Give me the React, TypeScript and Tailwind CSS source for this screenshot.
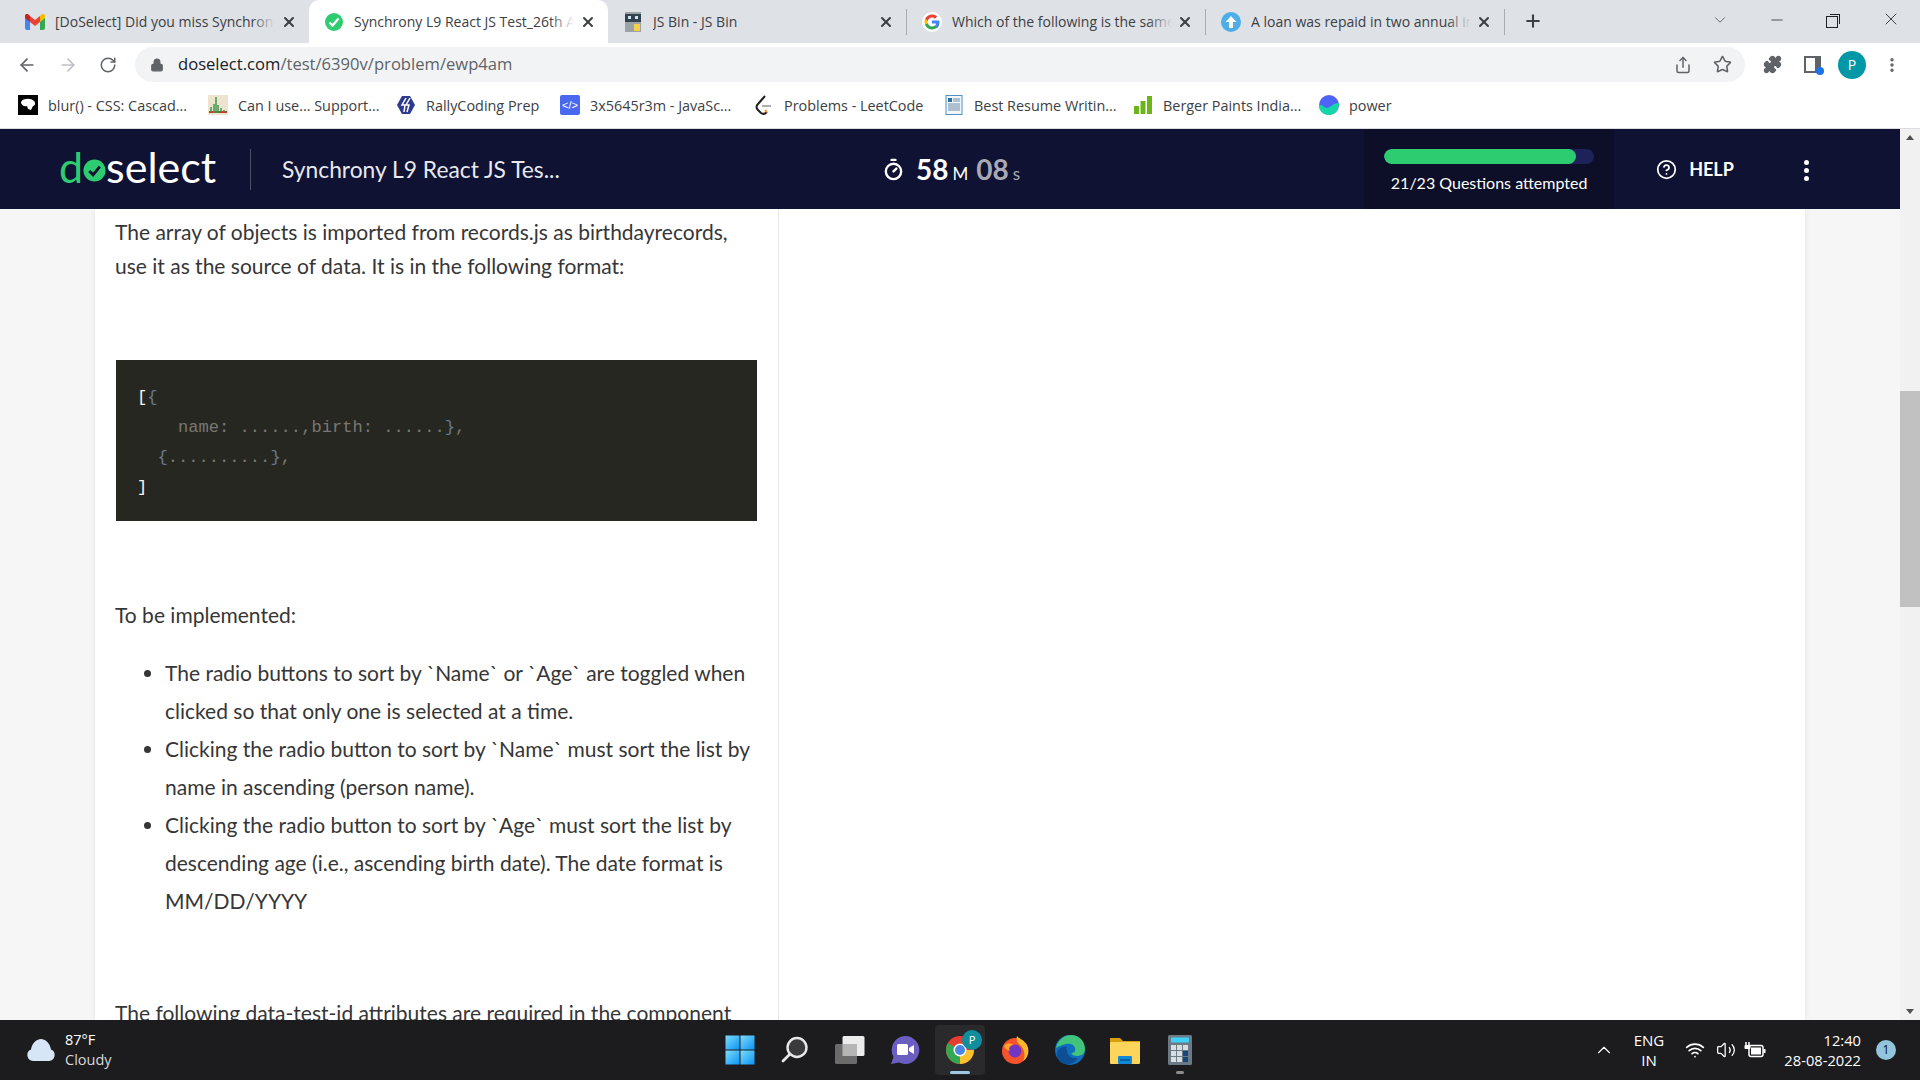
import { ArrowLeft, ArrowRight, ChevronDown, ChevronUp, CircleHelp, Lock, Minus, MoreVertical, Plus, Puzzle, RotateCw, Share, Star, Timer, Volume2, Wifi, X } from "lucide-react";
import type { ReactNode } from "react";

const Gmail = () => (
  <svg viewBox="0 0 20 16" className="w-[20px] h-[16px]">
    <path d="M0 3v11a2 2 0 0 0 2 2h3V7z" fill="#4285f4" />
    <path d="M20 3v11a2 2 0 0 1-2 2h-3V7z" fill="#34a853" />
    <path d="M15 2v6l5-4V2c0-2-2-2.500-3.500-1.500z" fill="#fbbc04" />
    <path d="M5 8V2l5 4 5-4v6l-5 4z" fill="#ea4335" />
    <path d="M0 4V2C0 0 2-.5 3.500.5L5 2v6z" fill="#c5221f" />
  </svg>
);

const CheckBadge = () => (
  <svg viewBox="0 0 20 20" className="w-[20px] h-[20px]">
    <circle cx="10" cy="10" r="9" fill="#2ecc71" />
    <path d="M5.500 10.500l3 3 6-7" fill="none" stroke="#fff" strokeWidth="2.400" />
  </svg>
);

const JsBin = () => (
  <svg viewBox="0 0 16 20" className="w-[16px] h-[20px]">
    <rect width="16" height="20" fill="#9ba3a9" />
    <rect y="2" width="16" height="8" fill="#33424f" />
    <rect x="3" y="4" width="3" height="3" fill="#cfe4f2" />
    <rect x="10" y="4" width="3" height="3" fill="#cfe4f2" />
    <rect x="9" y="12" width="6" height="7" fill="#f5d04c" />
  </svg>
);

const GoogleG = () => (
  <svg viewBox="0 0 24 24" className="w-[20px] h-[20px]">
    <circle cx="12" cy="12" r="12" fill="#fff" />
    <path d="M21 12.200c0-.7-.1-1.300-.2-1.900H12v3.600h5.100c-.2 1.200-.9 2.200-1.900 2.800v2.400h3c1.800-1.600 2.800-4 2.800-6.900z" fill="#4285f4" />
    <path d="M12 21c2.500 0 4.500-.8 6.100-2.300l-3-2.300c-.8.600-1.900.9-3.100.9-2.400 0-4.400-1.600-5.100-3.800H3.800v2.400C5.300 18.900 8.400 21 12 21z" fill="#34a853" />
    <path d="M6.900 13.500c-.4-1-.4-2.100 0-3.100V8H3.800c-1 2-1 4.900 0 6.900z" fill="#fbbc04" />
    <path d="M12 6.600c1.300 0 2.500.5 3.500 1.400L18.200 5.300C16.500 3.800 14.400 3 12 3 8.400 3 5.300 5.100 3.800 8l3.100 2.400C7.600 8.200 9.600 6.600 12 6.600z" fill="#ea4335" />
  </svg>
);

const UploadBadge = () => (
  <svg viewBox="0 0 20 20" className="w-[20px] h-[20px]">
    <circle cx="10" cy="10" r="10" fill="#4eaee8" />
    <path d="M10 4l5.500 6H12v6H8v-6H4.500z" fill="#fff" />
  </svg>
);

const tabs: { title: string; icon: ReactNode; active?: boolean; sep?: boolean }[] = [
  { title: "[DoSelect] Did you miss Synchrony L9 React", icon: <Gmail /> },
  { title: "Synchrony L9 React JS Test_26th August", icon: <CheckBadge />, active: true },
  { title: "JS Bin - JS Bin", icon: <JsBin />, sep: true },
  { title: "Which of the following is the same as", icon: <GoogleG />, sep: true },
  { title: "A loan was repaid in two annual instalments", icon: <UploadBadge />, sep: true },
];

function Tab({ title, icon, active, sep }: { title: string; icon: ReactNode; active?: boolean; sep?: boolean }) {
  return (
    <div className={`w-[299px] shrink-0 flex items-center pl-[15px] pr-[12px] ${active ? "bg-white rounded-t-[10px]" : ""} ${sep ? "h-[26px] border-r border-[#9aa0a6]/80" : "h-[43px]"}`}>
      <div className="w-[20px] shrink-0 flex justify-center">{icon}</div>
      <div className="relative ml-[10px] w-[220px] overflow-hidden whitespace-nowrap text-[14px] text-[#3c4043]">
        {title}
        <div className={`absolute inset-y-0 right-0 w-[24px] bg-gradient-to-r from-transparent ${active ? "to-white" : "to-[#dee1e6]"}`} />
      </div>
      <X size={16} strokeWidth={3} className="ml-auto text-[#3c4043]" />
    </div>
  );
}

const Rally = () => (
  <svg viewBox="0 0 20 20" className="w-[20px] h-[20px]">
    <path d="M6 1h8l5 9-5 9H6l-5-9z" fill="#2e3a8c" />
    <path d="M10 3L6 10h3l-1 7M14 3l-4 7h3l-2 7" fill="none" stroke="#fff" strokeWidth="1.500" />
  </svg>
);

const bookmarks: { title: string; cls: string; icon: ReactNode }[] = [
  {
    title: "blur() - CSS: Cascad...",
    cls: "w-[190px]",
    icon: (
      <svg viewBox="0 0 20 20" className="w-[20px] h-[20px]">
        <rect width="20" height="20" fill="#000" />
        <path d="M3 7c2-4 10-4 13-1 2 2 1 5-1 5l-2 4-3-1-1-3c-3 1-6-1-6-4z" fill="#fff" />
      </svg>
    ),
  },
  {
    title: "Can I use... Support...",
    cls: "w-[188px]",
    icon: (
      <svg viewBox="0 0 20 20" className="w-[20px] h-[20px]">
        <rect width="20" height="20" fill="#eee3cf" />
        <path d="M1 17h18" stroke="#c0392b" strokeWidth="2" />
        <path d="M3 17v-5M6 18V9M8 18V2M10 18v-8M13 17v-4M16 17v-2" stroke="#3e9b4f" strokeWidth="1.500" />
      </svg>
    ),
  },
  { title: "RallyCoding Prep", cls: "w-[164px]", icon: <Rally /> },
  {
    title: "3x5645r3m - JavaSc...",
    cls: "w-[194px]",
    icon: (
      <div className="w-[20px] h-[20px] bg-[#4a67f0] rounded-[2px] flex items-center justify-center text-white text-[11px] font-['Liberation_Sans']">&lt;/&gt;</div>
    ),
  },
  {
    title: "Problems - LeetCode",
    cls: "w-[190px]",
    icon: (
      <svg viewBox="0 0 20 20" className="w-[20px] h-[20px]">
        <path d="M11 1L4 9c-2 2-2 4 0 6l3 3c2 1.500 4 1 6-1" fill="none" stroke="#1f1f1f" strokeWidth="2" />
        <path d="M13 17l-2-2" stroke="#f0a020" strokeWidth="2" />
        <path d="M8 11h9" stroke="#b0b0b0" strokeWidth="2" />
      </svg>
    ),
  },
  {
    title: "Best Resume Writin...",
    cls: "w-[189px]",
    icon: (
      <svg viewBox="0 0 20 20" className="w-[20px] h-[20px]">
        <rect x="2" y="0.500" width="16" height="19" fill="#f2f7fb" stroke="#4f8fc4" />
        <rect x="4" y="3" width="4" height="4" fill="#2f6fa8" />
        <path d="M9 4h7M9 6h7M4 9h12M4 11h12M4 13h12M4 15h12" stroke="#6b8aa5" />
      </svg>
    ),
  },
  {
    title: "Berger Paints India...",
    cls: "w-[186px]",
    icon: (
      <svg viewBox="0 0 20 20" className="w-[20px] h-[20px]">
        <rect x="1" y="11" width="5" height="8" fill="#6cb31c" />
        <rect x="7.500" y="6" width="5" height="13" fill="#6cb31c" />
        <rect x="14" y="1" width="5" height="18" fill="#6cb31c" />
      </svg>
    ),
  },
  {
    title: "power",
    cls: "w-[100px]",
    icon: (
      <svg viewBox="0 0 20 20" className="w-[20px] h-[20px]">
        <circle cx="10" cy="10" r="10" fill="#4f63f5" />
        <path d="M0 10c3-1 5 3 8 3s6-5 12-5c0 7-4 12-10 12S0 16 0 10z" fill="#14d6a6" />
      </svg>
    ),
  },
];

const WinLogo = () => (
  <svg viewBox="0 0 30 30" className="w-[30px] h-[30px]">
    <defs>
      <linearGradient id="win" x1="0" y1="0" x2="1" y2="1">
        <stop offset="0" stopColor="#7ddcfb" />
        <stop offset="1" stopColor="#0a94f5" />
      </linearGradient>
    </defs>
    <rect x="0.500" y="0.500" width="14" height="14" fill="url(#win)" />
    <rect x="15.500" y="0.500" width="14" height="14" fill="url(#win)" />
    <rect x="0.500" y="15.500" width="14" height="14" fill="url(#win)" />
    <rect x="15.500" y="15.500" width="14" height="14" fill="url(#win)" />
  </svg>
);

const SearchIcon = () => (
  <svg viewBox="0 0 28 28" className="w-[28px] h-[28px]">
    <circle cx="16" cy="11.500" r="9.500" fill="#3a3a3c" stroke="#e8e8e8" strokeWidth="2.400" />
    <path d="M9 18l-7 7" stroke="#e8e8e8" strokeWidth="2.800" strokeLinecap="round" />
  </svg>
);

const TaskView = () => (
  <svg viewBox="0 0 30 28" className="w-[30px] h-[28px]">
    <rect x="7.500" y="0" width="22" height="20" rx="1.500" fill="#ececec" />
    <rect x="0" y="8" width="22" height="20" rx="1.500" fill="#6b6b6b" />
    <rect x="7.500" y="8" width="14.500" height="12" fill="#b5b5b5" />
  </svg>
);

const ChatIcon = () => (
  <svg viewBox="0 0 30 30" className="w-[30px] h-[30px]">
    <path d="M15 1a14 14 0 1 1-6 26.500L1 29l2.500-7A14 14 0 0 1 15 1z" fill="#6a5fc1" />
    <rect x="7" y="9" width="11" height="11" rx="1.500" fill="#fff" />
    <path d="M19 13l5-3v9l-5-3z" fill="#fff" />
  </svg>
);

const ChromeIcon = () => (
  <div className="relative w-[28px] h-[28px]">
    <svg viewBox="0 0 28 28" className="w-[28px] h-[28px]">
      <circle cx="14" cy="14" r="14" fill="#e53e30" />
      <path d="M14 14L1.900 7A14 14 0 0 0 14 28l7-14z" fill="#33a852" />
      <path d="M14 14h14a14 14 0 0 1-14 14z" fill="#fbc02d" />
      <circle cx="14" cy="14" r="6.500" fill="#fff" />
      <circle cx="14" cy="14" r="5" fill="#4a86e8" />
    </svg>
    <div className="absolute -top-[6px] -right-[8px] w-[20px] h-[20px] rounded-full bg-[#0f8f9e] text-white text-[11px] flex items-center justify-center">P</div>
  </div>
);

const FirefoxIcon = () => (
  <svg viewBox="0 0 28 28" className="w-[28px] h-[28px]">
    <circle cx="14" cy="15" r="13" fill="#f6532d" />
    <path d="M16 0c2 3 6 3 10 9 3 6 1 13-4 16 3-6 1-13-3-16-3-2-4-5-3-9z" fill="#ffb62b" />
    <circle cx="14" cy="15" r="6.500" fill="#7136c4" />
    <path d="M3 10c3-4 7-3 9-1-3 0-5 3-3 6-3-1-5-2-6-5z" fill="#ffa32a" />
  </svg>
);

const EdgeIcon = () => (
  <svg viewBox="0 0 30 30" className="w-[30px] h-[30px]">
    <circle cx="15" cy="15" r="15" fill="#0f6fbe" />
    <path d="M1 13C3 4 10 0 16 0c8 0 14 6 14 14 0 5-4 7-8 7-3 0-5-1-6-3 3 0 5-2 4-5-1-4-5-5-9-4S3 11 1 13z" fill="#41c37b" />
    <path d="M12 15c0 6 5 9 11 8-3 5-9 7-13 6-5-1-9-6-8-11 1-4 5-7 10-6-1 1-1 2 0 3z" fill="#0d4e94" />
  </svg>
);

const FolderIcon = () => (
  <svg viewBox="0 0 30 28" className="w-[30px] h-[28px]">
    <path d="M0 2h10l3 3h17v4H0z" fill="#d99f0c" />
    <rect y="6" width="30" height="22" rx="1" fill="#fcd55a" />
    <rect x="8" y="20" width="14" height="8" rx="1" fill="#1288d8" />
    <rect x="10" y="23" width="10" height="2" fill="#0b5fa5" />
  </svg>
);

const CalcIcon = () => (
  <svg viewBox="0 0 24 30" className="w-[24px] h-[30px]">
    <rect width="24" height="30" rx="1.500" fill="#6c7a86" />
    <rect x="3" y="2.500" width="18" height="5" fill="#3fd0f5" />
    {[0, 1, 2].flatMap((r) =>
      [0, 1, 2].map((c) => <rect key={`${r}${c}`} x={3 + c * 6} y={10 + r * 6} width="5" height="5" fill={c === 2 && r > 0 ? "#15467e" : "#d8dde0"} />)
    )}
  </svg>
);

const Battery = () => (
  <svg viewBox="0 0 22 18" className="w-[22px] h-[18px]">
    <path d="M2 1v3M5 1v3" stroke="#fff" strokeWidth="1.500" />
    <rect x="0.500" y="4" width="6" height="4" rx="1" fill="#fff" />
    <rect x="5" y="4.500" width="14" height="11" rx="2" fill="none" stroke="#fff" strokeWidth="1.500" />
    <rect x="7" y="6.500" width="10" height="7" fill="#fff" />
    <rect x="19.500" y="8" width="2" height="4" fill="#fff" />
  </svg>
);

function TaskItem({ children, dot }: { children: ReactNode; dot?: string }) {
  return (
    <div className={`relative w-[50px] h-[50px] rounded-[4px] flex items-center justify-center ${dot === "active" ? "bg-[#2a2a2d]" : ""}`}>
      {children}
      {dot === "active" && <div className="absolute bottom-[1px] w-[20px] h-[3px] rounded-full bg-[#9ecae1]" />}
      {dot === "open" && <div className="absolute bottom-[1px] w-[8px] h-[3px] rounded-full bg-[#8c8c8c]" />}
    </div>
  );
}

const listItems = [
  "The radio buttons to sort by `Name` or `Age` are toggled when clicked so that only one is selected at a time.",
  "Clicking the radio button to sort by `Name` must sort the list by name in ascending (person name).",
  "Clicking the radio button to sort by `Age` must sort the list by descending age (i.e., ascending birth date). The date format is MM/DD/YYYY",
];

export default function App() {
  return (
    <div className="w-[1920px] h-[1080px] overflow-hidden flex flex-col bg-white font-['Open_Sans',sans-serif]">
      {/* Tab strip */}
      <div className="h-[43px] shrink-0 bg-[#dee1e6] flex items-end pl-[10px]">
        <div className="flex items-center h-[43px]">
          {tabs.map((t) => (
            <Tab key={t.title} {...t} />
          ))}
        </div>
        <Plus size={20} strokeWidth={2.500} className="ml-[18px] mb-[12px] text-[#3c4043]" />
        <ChevronDown size={18} strokeWidth={1} className="ml-[168px] mb-[14px] text-[#3c4043]" />
        <Minus size={18} strokeWidth={1} className="ml-[39px] mb-[14px] text-[#202124]" />
        <div className="ml-[40px] mb-[15px] relative w-[12px] h-[12px] border border-[#202124]">
          <div className="absolute -top-[3px] -right-[3px] w-[10px] h-[10px] border-t border-r border-[#202124]" />
        </div>
        <X size={20} strokeWidth={1} className="ml-[43px] mb-[14px] text-[#202124]" />
      </div>

      {/* Toolbar */}
      <div className="h-[43px] shrink-0 bg-white flex items-center pl-[17px]">
        <ArrowLeft size={20} className="text-[#5f6368]" />
        <ArrowRight size={20} className="ml-[21px] text-[#bdc1c6]" />
        <RotateCw size={18} className="ml-[21px] text-[#5f6368]" />
        <div className="ml-[18px] w-[1610px] h-[35px] rounded-full bg-[#f1f3f4] flex items-center pl-[15px] pr-[13px]">
          <Lock size={14} fill="#5f6368" className="text-[#5f6368]" />
          <div className="ml-[14px] text-[16.6px] text-[#5f6368] whitespace-nowrap">
            <span className="text-[#202124]">doselect.com</span>/test/6390v/problem/ewp4am
          </div>
          <Share size={18} className="ml-auto text-[#5f6368]" />
          <Star size={19} className="ml-[21px] text-[#5f6368]" />
        </div>
        <Puzzle size={19} fill="#5f6368" className="ml-[18px] text-[#5f6368]" />
        <div className="ml-[22px] relative w-[17px] h-[17px] border-2 border-[#5f6368] border-r-[6px]">
          <div className="absolute -bottom-[4px] -right-[9px] w-[8px] h-[8px] rounded-full bg-[#1a73e8]" />
        </div>
        <div className="ml-[17px] w-[28px] h-[28px] rounded-full bg-[#0097a7] text-white text-[14px] flex items-center justify-center">P</div>
        <MoreVertical size={18} strokeWidth={2.500} className="ml-[17px] text-[#5f6368]" />
      </div>

      {/* Bookmarks */}
      <div className="h-[43px] shrink-0 bg-white flex items-center pl-[18px] pb-[3px] border-b border-[#dadce0]">
        {bookmarks.map((b) => (
          <div key={b.title} className={`${b.cls} shrink-0 flex items-center gap-[10px] text-[14.4px] text-[#3c4043] whitespace-nowrap`}>
            {b.icon}
            <span>{b.title}</span>
          </div>
        ))}
      </div>

      {/* Page + browser scrollbar */}
      <div className="flex-1 min-h-0 flex">
        <div className="w-[1900px] flex flex-col min-h-0">
          <header className="h-[80px] shrink-0 bg-[#101233] flex items-center font-['Lato',sans-serif] text-white">
            <div className="ml-[59px] w-[191px] flex items-center text-[43px] font-normal leading-none -mt-[5px]">
              <span className="text-[#2ecc71]">d</span>
              <svg viewBox="0 0 24 24" className="w-[23px] h-[23px] mt-[8px]">
                <circle cx="12" cy="12" r="11.500" fill="#2ecc71" />
                <path d="M6.500 12.500l4 4 7-8.500" fill="none" stroke="#101233" strokeWidth="3" />
              </svg>
              <span>select</span>
            </div>
            <div className="w-px h-[41px] bg-white/25" />
            <div className="ml-[31px] w-[600px] text-[22.8px] text-[#e8e9ef] whitespace-nowrap">Synchrony L9 React JS Tes...</div>
            <Timer size={23} strokeWidth={2.500} />
            <div className="ml-[11px] flex items-baseline font-bold text-[28px] leading-none">
              58<span className="ml-[4px] text-[17px] font-normal">M</span>
              <span className="ml-[8px] text-[#a9a9b3]">08</span>
              <span className="ml-[4px] text-[17px] font-normal text-[#a9a9b3]">s</span>
            </div>
            <div className="ml-[344px] w-[250px] h-full bg-[#0d0e27] flex flex-col items-center pt-[20px]">
              <div className="w-[210px] h-[15px] rounded-full bg-[#1f2258] overflow-hidden">
                <div className="w-[192px] h-full rounded-full bg-[#2ecc71]" />
              </div>
              <div className="mt-[7px] text-[16px] whitespace-nowrap">21/23 Questions attempted</div>
            </div>
            <CircleHelp size={21} strokeWidth={2} className="ml-[42px]" />
            <div className="ml-[12px] text-[18px] font-bold">HELP</div>
            <div className="ml-[70px] flex flex-col gap-[3px] mt-[2px]">
              <div className="w-[5px] h-[5px] rounded-full bg-white" />
              <div className="w-[5px] h-[5px] rounded-full bg-white" />
              <div className="w-[5px] h-[5px] rounded-full bg-white" />
            </div>
          </header>

          <main className="flex-1 min-h-0 overflow-hidden bg-[#f6f6f6] pl-[95px] pr-[95px] font-['Lato',sans-serif] text-[21px] text-[#363636]">
            <div className="w-[1710px] h-full bg-white shadow-[0_0_6px_rgba(0,0,0,0.08)] flex">
              <div className="w-[684px] h-[900px] shrink-0 border-r border-[#e6e6e6] pl-[20px] pr-[20px] pt-[6px] leading-[34px]">
                <p>The array of objects is imported from records.js as birthdayrecords, use it as the source of data. It is in the following format:</p>
                <pre className="mt-[77px] ml-px w-[641px] h-[161px] bg-[#272722] pl-[21px] pt-[23px] font-['Liberation_Mono',monospace] text-[17.1px] leading-[30px] text-[#787872]">
                  <span className="text-[#f8f8f2]">[</span>
                  <span className="text-[#66788a]">{"{"}</span>
                  {"\n    name: ......,birth: ......"}
                  <span className="text-[#66788a]">{"}"}</span>
                  {",\n  "}
                  <span className="text-[#66788a]">{"{"}</span>
                  {".........."}
                  <span className="text-[#66788a]">{"}"}</span>
                  {",\n"}
                  <span className="text-[#f8f8f2]">]</span>
                </pre>
                <p className="mt-[77px]">To be implemented:</p>
                <ul className="mt-[22px] list-disc pl-[50px] leading-[38px]">
                  {listItems.map((item) => (
                    <li key={item}>{item}</li>
                  ))}
                </ul>
                <p className="mt-[76px]">The following data-test-id attributes are required in the component</p>
              </div>
            </div>
          </main>
        </div>

        <div className="w-[20px] bg-[#f1f1f1] flex flex-col items-center text-[#505050]">
          <div className="h-[17px] flex items-center justify-center">
            <div className="w-0 h-0 border-x-[4px] border-x-transparent border-b-[5px] border-b-[#505050]" />
          </div>
          <div className="mt-[245px] w-full h-[216px] bg-[#c1c1c1]" />
          <div className="mt-auto h-[17px] flex items-center justify-center">
            <div className="w-0 h-0 border-x-[4px] border-x-transparent border-t-[5px] border-t-[#505050]" />
          </div>
        </div>
      </div>

      {/* Taskbar */}
      <div className="h-[60px] shrink-0 bg-[#1c1c1f] flex items-center text-white font-['Open_Sans',sans-serif]">
        <svg viewBox="0 0 32 24" className="ml-[25px] w-[32px] h-[24px]">
          <path d="M8 23a6 6 0 0 1-2-11.500C7 5 12 1 16 1s9 4 10 10.500A6 6 0 0 1 24 23z" fill="#d6e6f7" />
        </svg>
        <div className="ml-[8px] w-[60px] text-[14.5px] leading-[20px]">
          <div>87°F</div>
          <div className="text-[#d8d8d8]">Cloudy</div>
        </div>
        <div className="ml-[590px] flex items-center gap-[5px]">
          <TaskItem><WinLogo /></TaskItem>
          <TaskItem><SearchIcon /></TaskItem>
          <TaskItem><TaskView /></TaskItem>
          <TaskItem><ChatIcon /></TaskItem>
          <TaskItem dot="active"><ChromeIcon /></TaskItem>
          <TaskItem><FirefoxIcon /></TaskItem>
          <TaskItem><EdgeIcon /></TaskItem>
          <TaskItem><FolderIcon /></TaskItem>
          <TaskItem dot="open"><CalcIcon /></TaskItem>
        </div>
        <ChevronUp size={22} strokeWidth={1.200} className="ml-[388px]" />
        <div className="ml-[12px] w-[44px] text-center text-[15px] leading-[20px]">
          <div>ENG</div>
          <div>IN</div>
        </div>
        <Wifi size={20} strokeWidth={2} className="ml-[14px]" />
        <Volume2 size={20} strokeWidth={1.500} className="ml-[11px]" />
        <div className="ml-[8px]"><Battery /></div>
        <div className="ml-[5px] w-[90px] text-right text-[14.7px] leading-[20px]">
          <div>12:40</div>
          <div className="whitespace-nowrap">28-08-2022</div>
        </div>
        <div className="ml-[15px] w-[20px] h-[20px] rounded-full bg-[#92c4dc] text-[#111] text-[12px] flex items-center justify-center">1</div>
      </div>
    </div>
  );
}
